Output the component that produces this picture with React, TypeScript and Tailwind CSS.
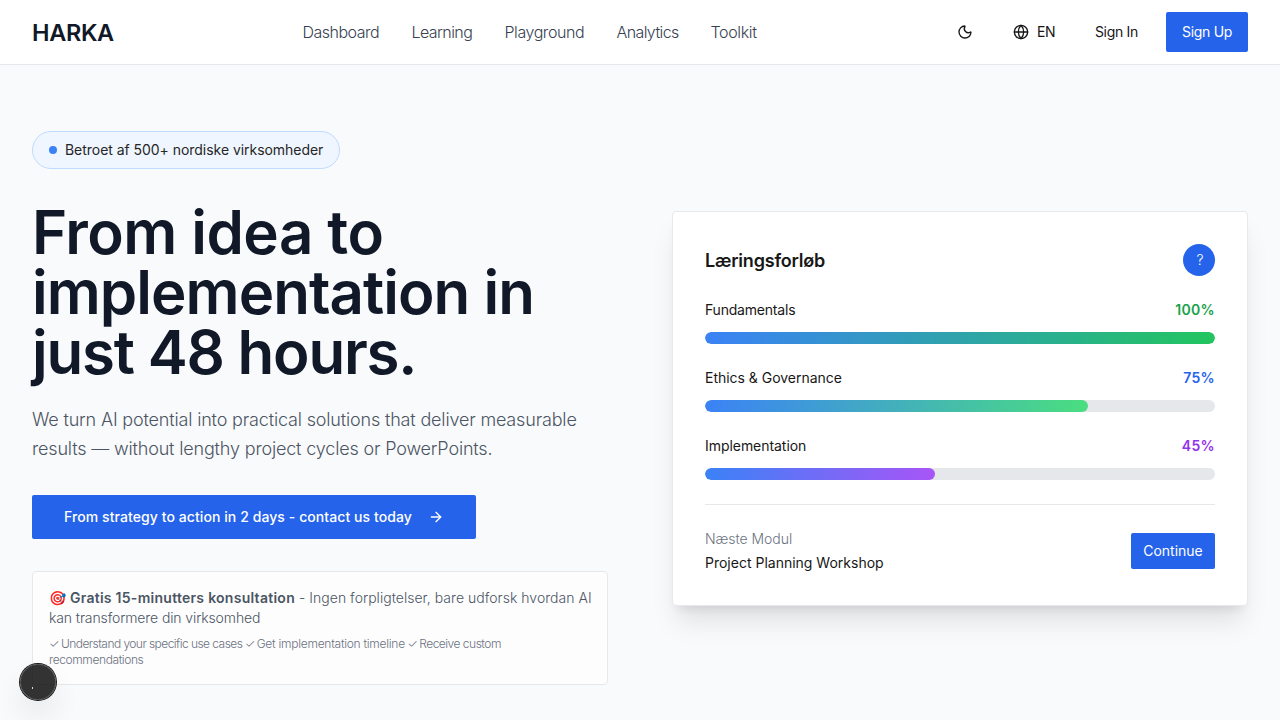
import { ArrowRight, Globe, Moon } from "lucide-react";

const navItems = [
  { label: "Dashboard", className: "w-[77px] tracking-[-0.5px]" },
  { label: "Learning", className: "w-[61px] tracking-[-0.58px]" },
  { label: "Playground", className: "w-[80px] tracking-[-0.44px]" },
  { label: "Analytics", className: "w-[62px] tracking-[-0.6px]" },
  { label: "Toolkit", className: "w-[47px] tracking-[-0.35px]" },
];

const modules = [
  {
    name: "Fundamentals",
    value: 100,
    nameClass: "tracking-[-0.2px]",
    valueClass: "text-[#16a34a]",
    barClass: "from-[#3b82f6] to-[#22c55e]",
  },
  {
    name: "Ethics & Governance",
    value: 75,
    nameClass: "tracking-[-0.02px]",
    valueClass: "text-[#2563eb]",
    barClass: "from-[#3b82f6] to-[#4ade80]",
  },
  {
    name: "Implementation",
    value: 45,
    nameClass: "tracking-[-0.05px]",
    valueClass: "text-[#9333ea]",
    barClass: "from-[#3b82f6] to-[#a855f7]",
  },
];

function Header() {
  return (
    <header className="flex h-[65px] shrink-0 items-center justify-between border-b border-[#e5e7eb] bg-white px-8">
      <a className="w-[83px] pt-0.5 text-[23.5px] leading-8 font-semibold tracking-[-0.35px] text-[#111827]">HARKA</a>
      <nav className="flex gap-8 text-base font-light text-[#374151]">
        {navItems.map((item) => (
          <a key={item.label} className={item.className}>
            {item.label}
          </a>
        ))}
      </nav>
      <div className="flex items-center gap-4 text-sm text-[#171717]">
        <button className="flex size-10 items-center justify-center">
          <Moon size={16} strokeWidth={2} />
        </button>
        <button className="flex h-10 w-[66px] items-center gap-2 pl-3">
          <Globe size={16} strokeWidth={2} />
          <span className="tracking-[-0.5px]">EN</span>
        </button>
        <button className="h-10 w-[67px] whitespace-nowrap tracking-[-0.3px]">Sign In</button>
        <button className="h-10 w-[82px] whitespace-nowrap rounded-[2px] bg-[#2563eb] tracking-[-0.3px] text-white">
          Sign Up
        </button>
      </div>
    </header>
  );
}

function Hero() {
  return (
    <div className="flex flex-col items-start">
      <div className="flex h-[38px] w-[308px] items-center gap-2 rounded-full border border-[#bfdbfe] bg-[#eff6ff] px-4 text-sm tracking-[-0.04px] whitespace-nowrap text-[#262626]">
        <span className="size-2 shrink-0 rounded-full bg-[#3b82f6]" />
        Betroet af 500+ nordiske virksomheder
      </div>
      <h1 className="mt-[33px] text-[60px] leading-[60px] font-[580] whitespace-nowrap text-[#111827]">
        <span className="block tracking-[-0.55px]">From idea to</span>
        <span className="block tracking-[-0.95px]">implementation in</span>
        <span className="block tracking-[-1.2px]">just 48 hours.</span>
      </h1>
      <p className="mt-[23px] text-lg leading-[29px] font-light tracking-[-0.165px] whitespace-nowrap text-[#4b5563]">
        We turn AI potential into practical solutions that deliver measurable
        <br />
        results — without lengthy project cycles or PowerPoints.
      </p>
      <button className="mt-8 flex h-11 w-[444px] items-center justify-between rounded-[2px] bg-[#2563eb] px-8 text-sm font-medium tracking-[0.08px] whitespace-nowrap text-white">
        From strategy to action in 2 days - contact us today
        <ArrowRight size={16} />
      </button>
      <div className="mt-8 w-full rounded-[4px] border border-[#e8e8ea] bg-[#fdfdfe] p-4 whitespace-nowrap">
        <p className="text-sm leading-5 font-light text-[#4b5563]">
          🎯 <strong className="font-semibold tracking-[0.27px]">Gratis 15-minutters konsultation</strong>
          <span className="tracking-[0.03px]"> - Ingen forpligtelser, bare udforsk hvordan AI</span>
          <br />
          <span className="tracking-[-0.11px]">kan transformere din virksomhed</span>
        </p>
        <p className="mt-2 text-xs leading-4 font-light tracking-[-0.4px] text-[#6b7280]">
          <span className="tracking-[-1px]">✓ </span>
          <span className="tracking-[-0.55px]">Understand your specific use cases</span>
          <span className="tracking-[-1px]"> ✓ </span>
          <span className="tracking-[-0.26px]">Get implementation timeline</span>
          <span className="tracking-[-1px]"> ✓ </span>
          <span className="tracking-[-0.5px]">Receive custom</span>
          <br />
          recommendations
        </p>
      </div>
    </div>
  );
}

function LearningCard() {
  return (
    <div className="rounded-[4px] border border-[#e8e8ea] bg-white p-8 text-sm text-[#171717] shadow-[0_20px_25px_-5px_rgba(0,0,0,0.1),0_8px_10px_-6px_rgba(0,0,0,0.1)]">
      <div className="flex items-center justify-between">
        <h2 className="pt-0.5 text-lg leading-7 font-semibold tracking-[-0.2px]">Læringsforløb</h2>
        <span className="flex size-8 items-center justify-center rounded-full bg-[#2563eb] pl-0.5 font-light text-white">
          ?
        </span>
      </div>
      <div className="mt-6 flex flex-col gap-6">
        {modules.map((m) => (
          <div key={m.name} className="flex flex-col gap-3">
            <div className="flex justify-between leading-5">
              <span className={m.nameClass}>{m.name}</span>
              <span className={`font-semibold tracking-[0.35px] ${m.valueClass}`}>{m.value}%</span>
            </div>
            <div className="h-3 overflow-hidden rounded-full bg-[#e5e7eb]">
              <div className={`h-full rounded-full bg-linear-to-r/srgb ${m.barClass}`} style={{ width: `${m.value}%` }} />
            </div>
          </div>
        ))}
      </div>
      <div className="mt-6 flex items-center justify-between border-t border-[#e5e7eb] pt-6">
        <div className="flex flex-col gap-1">
          <span className="leading-5 font-light tracking-[-0.05px] text-[#6b7280]">Næste Modul</span>
          <span className="leading-5">Project Planning Workshop</span>
        </div>
        <button className="h-9 w-[84px] rounded-[2px] bg-[#2563eb] text-white">Continue</button>
      </div>
    </div>
  );
}

export default function App() {
  return (
    <div className="relative flex h-[720px] flex-col overflow-hidden bg-[#f9fafc] font-['Inter','Liberation_Sans',sans-serif]">
      <Header />
      <main className="grid grid-cols-2 items-center gap-16 px-8 pt-[66px]">
        <Hero />
        <LearningCard />
      </main>
      <div className="absolute bottom-5 left-5 size-9 rounded-full bg-black/80 shadow-[0_0_0_1px_#171717,inset_0_0_0_1px_rgba(255,255,255,0.14),0_16px_32px_-8px_rgba(0,0,0,0.24)]">
        <span className="absolute top-[23px] left-3 h-[2px] w-px bg-white/80" />
      </div>
    </div>
  );
}
